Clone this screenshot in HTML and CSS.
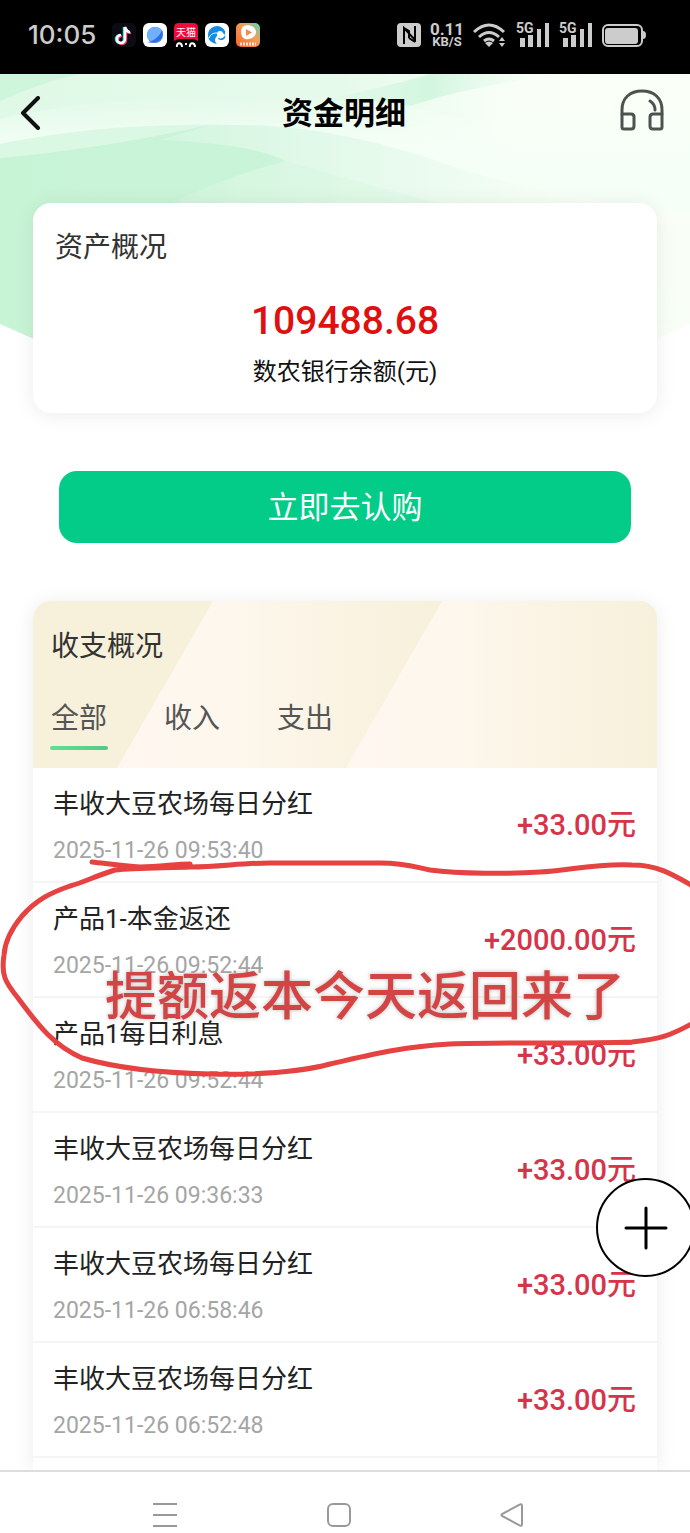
FILE: index.html
```html
<!DOCTYPE html>
<html lang="zh-CN">
<head>
<meta charset="utf-8">
<meta name="viewport" content="width=device-width, initial-scale=1">
<title>资金明细</title>
<link rel="stylesheet" href="styles.css">
</head>
<body>
<div class="phone">
  <div class="status">
    <time class="clock">10:05</time>
    <div class="apps">
      <svg class="app" viewBox="0 0 24 24"><rect width="24" height="24" rx="5" fill="#0b0b14"/><g fill="none" stroke-width="2.500"><path d="M12 4v12a4 4 0 1 1-4-4M12 4c1 3 3 5 5 5" stroke="#25e5e0"/><path d="M14 5v12a4 4 0 1 1-4-4M14 6c1 3 3 4 5 4" stroke="#f5375b"/><path d="M13 4v12a4 4 0 1 1-4-4M13 4c1 3 3 5 5 5" stroke="#fff"/></g></svg>
      <svg class="app" viewBox="0 0 24 24"><rect width="24" height="24" rx="6" fill="#fff"/><circle cx="12" cy="12" r="8" fill="#3b82ee"/><path d="M4.500 15C3 8 8 3 14 4c4 1 6 4 6 7L9 19z" fill="#6fb0fa"/><path d="M4 19c6 0 13-6 15-12 3 7-4 15-15 12z" fill="#2f6fe4"/></svg>
      <svg class="app" viewBox="0 0 24 24"><path d="M5 0h14q5 0 5 5v13l-4-2H4l-4 2V5q0-5 5-5z" fill="#f5063c"/><text x="12" y="13" class="app-text">天猫</text><path d="M3 24c-1-5 5-5 5 0M16 24c-1-5 5-5 5 0" fill="none" stroke="#fff" stroke-width="2"/><path d="M11 20h2v2h-2z" fill="#fff"/></svg>
      <svg class="app" viewBox="0 0 24 24"><rect width="24" height="24" rx="6" fill="#fff"/><path d="M20 8A9 9 0 1 0 12 21c-3-3-2-6 0-8 1-3 5-5 8-1z" fill="#168be4"/><circle cx="15" cy="11" r="3" fill="#fff"/><path d="M13 15c3 1 6 0 7-3 1 3-1 5-4 5-2 0-3-1-3-2z" fill="#168be4"/><path d="M4 15c2-4 4-5 8-5" fill="none" stroke="#fff"/></svg>
      <svg class="app" viewBox="0 0 24 24"><defs><linearGradient id="video" x1="1" y1="0" x2="0" y2="1"><stop stop-color="#55d9b5"/><stop offset=".4" stop-color="#f0a05a"/><stop offset="1" stop-color="#f8642d"/></linearGradient></defs><rect width="24" height="24" rx="5" fill="url(#video)"/><path d="M8 3c5-2 12 1 12 6s-6 8-11 7c-5-2-5-11-1-13z" fill="#fff"/><path d="M10 6l6 3.500-6 3.500z" fill="#f58a4b"/><path d="M4 21h16" stroke="#fff" stroke-width="3" stroke-dasharray="2 1" opacity=".8"/></svg>
    </div>
    <div class="signals">
      <svg class="nfc" viewBox="0 0 24 24"><rect width="24" height="24" rx="4" fill="#ccc"/><path d="M7 21V5l11 12V3M7 5l5 3v7M18 19l-6-4" fill="none" stroke="#000" stroke-width="2"/></svg>
      <div class="speed"><span class="rate">0.11</span><span class="unit">KB/S</span></div>
      <svg class="wifi" viewBox="0 0 34 24"><g fill="none" stroke="#ccc" stroke-width="3"><path d="M1 9q15-14 30 0"/><path d="M6 14q10-9 20 0"/><path d="M11 18q5-4 10 0"/></g><path d="M12 20q4-3 8 0l-4 4z" fill="#ccc"/><path d="M26 18l3-4 3 4zM26 20h6l-3 4z" fill="#ccc"/></svg>
      <svg class="cell" viewBox="0 0 34 24"><text x="0" y="10" class="cell-text">5G</text><path d="M4 15h5v9H4zM12 12h5v12h-5zM21 6h4v18h-4zM29 0h4v24h-4z" fill="#ccc"/></svg>
      <svg class="cell" viewBox="0 0 34 24"><text x="0" y="10" class="cell-text">5G</text><path d="M4 15h5v9H4zM12 12h5v12h-5zM21 6h4v18h-4zM29 0h4v24h-4z" fill="#ccc"/></svg>
      <svg class="battery" viewBox="0 0 44 24"><rect x="1" y="2" width="39" height="21" rx="5" fill="none" stroke="#ccc" stroke-width="2"/><rect x="3" y="5" width="33" height="16" rx="3" fill="#ccc"/><path d="M41 8q3 0 3 4t-3 4z" fill="#ccc"/></svg>
    </div>
  </div>

  <main class="screen">
    <svg class="backdrop" viewBox="0 0 690 340" preserveAspectRatio="none" aria-hidden="true">
      <defs>
        <linearGradient id="base"><stop stop-color="#c8f4d6"/><stop offset=".38" stop-color="#c9f4d8"/><stop offset=".6" stop-color="#e0f9e7"/><stop offset=".8" stop-color="#f8fff6"/><stop offset="1" stop-color="#f9fff7"/></linearGradient>
        <linearGradient id="sky"><stop stop-color="#dff9e6"/><stop offset=".5" stop-color="#e6faeb"/><stop offset=".75" stop-color="#f9fff7"/><stop offset="1" stop-color="#fafff8"/></linearGradient>
        <linearGradient id="glow" x1="0" y1="0" x2="0" y2="1"><stop stop-color="#f6fff7" stop-opacity="0"/><stop offset=".5" stop-color="#f6fff7"/></linearGradient>
        <linearGradient id="sweep"><stop stop-color="#d3f6df"/><stop offset=".4" stop-color="#e6faec"/><stop offset=".8" stop-color="#f9fff7"/></linearGradient>
        <linearGradient id="lower"><stop stop-color="#d0f5dc"/><stop offset=".5" stop-color="#e4faea"/><stop offset="1" stop-color="#f9fff7"/></linearGradient>
        <linearGradient id="ray"><stop stop-color="#d3f6df" stop-opacity="0"/><stop offset=".5" stop-color="#d3f6df"/><stop offset="1" stop-color="#f0fcf3" stop-opacity="0"/></linearGradient>
      </defs>
      <path d="M0 0H690V250Q345 410 0 250Z" fill="url(#base)"/>
      <path d="M170 130Q220 105 285 87Q370 105 460 135H690V250H600Q400 150 170 160Z" fill="url(#lower)"/>
      <path d="M0 70C80 54 150 50 210 51Q100 75 0 84Z" fill="#daf8e4"/>
      <path d="M210 51C300 46 380 65 460 95H690V250Q640 160 425 126L285 87Q255 70 160 66Z" fill="url(#sweep)"/>
      <path d="M0 0H690V140Q560 125 460 95C380 65 300 50 230 51C150 50 80 54 0 70Z" fill="url(#sky)"/>
      <path d="M0 45Q100 22 250 20Q370 18 460 45H690V140Q560 125 460 95C380 65 300 50 230 51C150 50 80 54 0 70Z" fill="url(#glow)"/>
      <path d="M0 0H80Q45 7 0 27Z" fill="#cdf6db"/>
      <path d="M300 30Q380 15 430 0H560Q470 12 410 32Q360 22 300 30Z" fill="url(#ray)"/>
    </svg>

    <header class="topbar">
      <button class="icon-button" type="button" aria-label="返回"><svg class="back" viewBox="0 0 22 34"><path d="M18 2L3 17l15 15" fill="none" stroke="#111" stroke-width="4" stroke-linecap="round" stroke-linejoin="round"/></svg></button>
      <h1 class="page-title">资金明细</h1>
      <button class="icon-button help" type="button" aria-label="客服"><svg class="headset" viewBox="0 0 44 42"><g fill="none" stroke="#4c524e" stroke-width="3" stroke-linecap="round" stroke-linejoin="round"><path d="M2 25V21C2 9 10 2 22 2s20 7 20 19v4"/><path d="M2 25h9q3 0 3 3v9q0 3-3 3H4q-2 0-2-2zM42 25h-9q-3 0-3 3v9q0 3 3 3h7q2 0 2-2z"/><path d="M30 12q5 3 5 9"/></g></svg></button>
    </header>

    <section class="card overview">
      <h2 class="section-title">资产概况</h2>
      <strong class="balance">109488.68</strong>
      <span class="balance-label">数农银行余额(元)</span>
    </section>

    <button class="subscribe" type="button">立即去认购</button>

    <section class="card ledger">
      <div class="ledger-head">
        <svg class="ledger-pattern" viewBox="0 0 624 167" preserveAspectRatio="none" aria-hidden="true">
          <defs><linearGradient id="s1"><stop stop-color="#fff7f0"/><stop offset=".35" stop-color="#fdf7ed"/><stop offset="1" stop-color="#f7f0da"/></linearGradient></defs>
          <path d="M0 0H624V167H0z" fill="#f7f0da"/>
          <path d="M180 0H409L313 167H84z" fill="url(#s1)"/>
          <path d="M409 0H624V167H313z" fill="url(#s1)"/>
        </svg>
        <h2 class="section-title">收支概况</h2>
        <nav class="tabs">
          <button class="tab active" type="button">全部</button>
          <button class="tab" type="button">收入</button>
          <button class="tab" type="button">支出</button>
        </nav>
      </div>
      <ul class="rows">
        <li class="row"><div class="entry"><span class="name">丰收大豆农场每日分红</span><time class="date">2025-11-26 09:53:40</time></div><span class="amount">+33.00元</span></li>
        <li class="row"><div class="entry"><span class="name">产品1-本金返还</span><time class="date">2025-11-26 09:52:44</time></div><span class="amount">+2000.00元</span></li>
        <li class="row"><div class="entry"><span class="name">产品1每日利息</span><time class="date">2025-11-26 09:52:44</time></div><span class="amount">+33.00元</span></li>
        <li class="row"><div class="entry"><span class="name">丰收大豆农场每日分红</span><time class="date">2025-11-26 09:36:33</time></div><span class="amount">+33.00元</span></li>
        <li class="row"><div class="entry"><span class="name">丰收大豆农场每日分红</span><time class="date">2025-11-26 06:58:46</time></div><span class="amount">+33.00元</span></li>
        <li class="row"><div class="entry"><span class="name">丰收大豆农场每日分红</span><time class="date">2025-11-26 06:52:48</time></div><span class="amount">+33.00元</span></li>
      </ul>
    </section>

    <div class="markup">
      <svg class="loop" viewBox="0 0 690 230" preserveAspectRatio="none" aria-hidden="true"><path d="M92 12C110 14 125 16 140 17C160 17 175 14 190 14M700 40C675 26 660 15 632 15C600 13 570 20 540 22C510 24 460 24 430 20C415 17 405 13 380 13H270C240 13 220 17 190 17C165 18 135 18 115 20C95 26 85 32 70 36C50 43 36 50 22 66C12 78 5 90 4 105C1 125 5 132 18 148C40 178 55 196 82 208C120 219 160 223 210 224C260 225 300 222 330 214C370 205 400 197 450 194C510 192 580 194 632 192C660 189 670 186 695 172" fill="none" stroke="#e64242" stroke-width="5" stroke-linecap="round" stroke-linejoin="round"/></svg>
      <p class="note">提额返本今天返回来了</p>
    </div>
    <button class="fab" type="button" aria-label="添加"><svg class="plus" viewBox="0 0 44 44"><path d="M22 2v40M2 22h40" stroke="#000" stroke-width="3" stroke-linecap="round"/></svg></button>
  </main>

  <nav class="system">
    <button class="key" type="button" aria-label="任务"><svg class="glyph" viewBox="0 0 26 26"><path d="M1 2h24M1 13h24M1 24h24" stroke="#999" stroke-width="2"/></svg></button>
    <button class="key" type="button" aria-label="主页"><svg class="glyph" viewBox="0 0 26 26"><rect x="2" y="2" width="22" height="22" rx="5" fill="none" stroke="#999" stroke-width="2"/></svg></button>
    <button class="key" type="button" aria-label="后退"><svg class="glyph" viewBox="0 0 26 26"><path d="M23 4v18q0 3-3 1L3 14q-1-1 0-2L20 3q3-2 3 1z" fill="none" stroke="#999" stroke-width="2"/></svg></button>
  </nav>
</div>
</body>
</html>
```
FILE: styles.css
```css
* { box-sizing: border-box; }
body {
  margin: 0;
  background: #fff;
  color: #222;
  font-family: Roboto, "Noto Sans CJK SC", sans-serif;
}
button {
  margin: 0;
  padding: 0;
  border: 0;
  background: none;
  color: inherit;
  font: inherit;
  cursor: pointer;
}
svg { display: block; }
.phone {
  display: flex;
  flex-direction: column;
  height: 100vh;
  overflow: hidden;
}

.status {
  display: flex;
  align-items: center;
  flex: none;
  height: 74px;
  padding: 0 44px 4px 28px;
  background: #000;
  color: #ccc;
}
.clock {
  font: 500 26px/32px Inter, sans-serif;
}
.apps {
  display: flex;
  gap: 7px;
  margin-left: 16px;
}
.app { width: 24px; height: 24px; }
.app-text {
  fill: #fff;
  font-size: 10px;
  text-anchor: middle;
}
.signals {
  display: flex;
  align-items: center;
  gap: 9px;
  margin-left: auto;
}
.nfc { width: 24px; height: 24px; }
.speed {
  display: flex;
  flex-direction: column;
  align-items: center;
  width: 34px;
  font-family: Roboto, sans-serif;
  font-weight: 700;
}
.rate { font-size: 17px; line-height: 14px; }
.unit { font-size: 13px; line-height: 12px; }
.wifi, .cell { width: 34px; height: 24px; }
.cell { overflow: visible; }
.cell-text {
  fill: #ccc;
  font: 700 14px Roboto, sans-serif;
}
.battery { width: 44px; height: 24px; }

.screen {
  position: relative;
  display: flex;
  flex: 1;
  flex-direction: column;
  min-height: 0;
  overflow: hidden;
}
.backdrop {
  position: absolute;
  top: 0;
  left: 0;
  width: 100%;
  height: 340px;
}
.topbar {
  position: relative;
  display: grid;
  grid-template-columns: 48px 1fr 48px;
  align-items: center;
  flex: none;
  height: 78px;
  padding: 0 22px 0 20px;
}
.icon-button { justify-self: start; }
.help {
  align-self: start;
  justify-self: end;
  padding: 15px 2px 0;
}
.back { width: 22px; height: 34px; }
.headset { width: 48px; height: 42px; }
.page-title {
  margin: 0;
  padding-top: 2px;
  color: #000;
  font-size: 31px;
  line-height: 40px;
  text-align: center;
}

.card {
  position: relative;
  margin: 0 33px;
  background: #fff;
  box-shadow: 0 2px 20px rgba(0, 0, 0, 0.08);
}
.overview {
  display: flex;
  flex: none;
  flex-direction: column;
  align-items: center;
  margin-top: 51px;
  padding: 25px 22px 23px;
  border-radius: 18px;
}
.section-title {
  align-self: flex-start;
  margin: 0;
  color: #333;
  font-size: 28px;
  font-weight: 400;
  line-height: 40px;
}
.balance {
  margin-top: 30px;
  color: #e01010;
  font-size: 39px;
  font-weight: 500;
  line-height: 46px;
}
.balance-label {
  margin-top: 10px;
  color: #111;
  font-size: 24px;
  line-height: 36px;
}
.subscribe {
  flex: none;
  height: 72px;
  margin: 58px 59px;
  padding-bottom: 6px;
  border-radius: 18px;
  background: #02cc88;
  color: #fff;
  font-size: 31px;
}

.ledger {
  display: flex;
  flex: 1 0 auto;
  flex-direction: column;
  border-radius: 18px 18px 0 0;
}
.ledger-head {
  position: relative;
  height: 167px;
  padding: 26px 18px 0;
  overflow: hidden;
  border-radius: 18px 18px 0 0;
}
.ledger-pattern {
  position: absolute;
  inset: 0;
  width: 100%;
  height: 100%;
}
.ledger-head .section-title, .tabs { position: relative; }
.tabs {
  display: flex;
  gap: 57px;
  margin-top: 32px;
}
.tab {
  position: relative;
  color: #555;
  font-size: 28px;
  line-height: 40px;
}
.tab.active::after {
  position: absolute;
  right: -1px;
  bottom: -11px;
  left: -1px;
  height: 4px;
  border-radius: 2px;
  background: linear-gradient(90deg, #5fe08f, #55c987);
  content: "";
}
.rows {
  margin: 0;
  padding: 0;
  list-style: none;
}
.row {
  display: flex;
  align-items: center;
  justify-content: space-between;
  height: 115px;
  padding: 0 21px 0 20px;
  border-bottom: 2px solid #f5f5f5;
}
.entry {
  display: flex;
  flex-direction: column;
  gap: 13px;
  padding-top: 2px;
}
.name {
  color: #222;
  font-size: 26px;
  line-height: 38px;
}
.date {
  color: #a5a5a5;
  font-size: 23px;
  line-height: 30px;
}
.amount {
  color: #d6344a;
  font-size: 29px;
  font-weight: 500;
  line-height: 40px;
}

.markup {
  position: absolute;
  top: 776px;
  right: 0;
  left: 0;
  pointer-events: none;
}
.loop { width: 100%; height: 230px; }
.note {
  position: absolute;
  top: 110px;
  right: 0;
  left: 0;
  margin: 0;
  padding-left: 40px;
  color: #d34545;
  font-size: 52px;
  font-weight: 500;
  line-height: 76px;
  text-align: center;
  text-shadow: 0 0 4px rgba(120, 120, 120, 0.5);
  white-space: nowrap;
}
.fab {
  position: absolute;
  right: -5px;
  bottom: 193px;
  display: grid;
  place-items: center;
  width: 99px;
  height: 99px;
  border: 2px solid #000;
  border-radius: 50%;
  background: #fff;
}
.plus { width: 44px; height: 44px; }

.system {
  display: flex;
  align-items: center;
  justify-content: space-between;
  flex: none;
  height: 63px;
  padding: 24px 165px 0 152px;
  border-top: 2px solid #ddd;
  background: #fff;
}
.glyph { width: 26px; height: 26px; }
```
